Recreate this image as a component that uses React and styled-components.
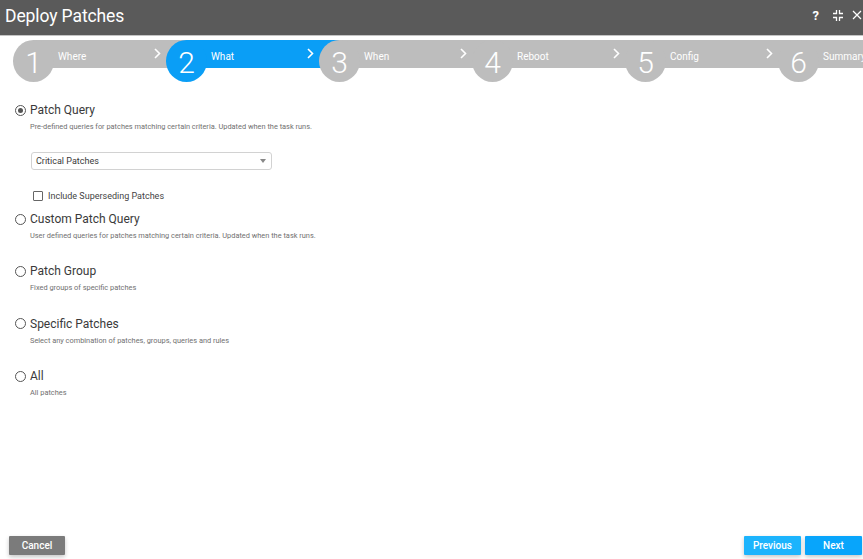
import React from "react";
import styled, { createGlobalStyle } from "styled-components";

const Global = createGlobalStyle`
  html, body { margin: 0; padding: 0; background: #fff; }
  body { font-family: Roboto, "Liberation Sans", Arial, sans-serif; }
  #root { height: 100vh; }
  * { box-sizing: border-box; }
`;

const Page = styled.div`
  height: 100vh;
  display: flex;
  flex-direction: column;
  overflow: hidden;
`;

const Header = styled.header`
  height: 36px;
  flex-shrink: 0;
  background: #5a5a5a;
  border-bottom: 1px solid #c4c4c4;
  display: flex;
  align-items: center;
  justify-content: space-between;
  padding: 0 1px 3px 5px;
`;

const Title = styled.h1`
  margin: 0;
  font-size: 17.5px;
  font-weight: 400;
  color: #fff;
  letter-spacing: -0.1px;
`;

const HeaderIcons = styled.div`
  display: flex;
  align-items: center;
  gap: 9px;
  color: #fff;
  margin-top: -2px;
`;

const Help = styled.span`
  font-size: 13px;
  font-weight: 700;
  line-height: 1;
  margin-right: 5px;
`;

const Steps = styled.nav`
  display: flex;
  padding: 4px 0 0 13px;
  flex-shrink: 0;
  overflow: hidden;
`;

const Step = styled.div`
  display: flex;
  width: 153px;
  flex-shrink: 0;
`;

const Circle = styled.div`
  position: relative;
  z-index: 2;
  width: 41px;
  height: 42px;
  flex-shrink: 0;
  border-radius: 50%;
  background: ${(p) => (p.$active ? "#0a9ef6" : "#bdbdbd")};
  color: #fff;
  font-size: 30px;
  font-weight: 300;
  display: flex;
  align-items: center;
  justify-content: center;
  padding-top: 3px;
`;

const Segment = styled.div`
  flex: 1 0 auto;
  height: 28px;
  margin-left: -20px;
  margin-right: -21px;
  padding: 0 26px 0 24px;
  background: ${(p) => (p.$active ? "#0a9ef6" : "#bdbdbd")};
  display: flex;
  align-items: center;
  justify-content: space-between;
  color: #fff;
`;

const StepLabel = styled.span`
  font-size: 10px;
  font-weight: 400;
  margin-top: 4px;
  white-space: nowrap;
`;

const Chevron = styled.svg`
  width: 7px;
  height: 11px;
  margin-top: -1px;
`;

const Content = styled.main`
  flex: 1;
  display: flex;
  flex-direction: column;
  padding: 21px 0 0 15px;
`;

const Option = styled.section`
  display: flex;
  flex-direction: column;
  margin-bottom: ${(p) => p.$gap}px;
`;

const RadioRow = styled.label`
  display: flex;
  align-items: center;
  gap: 4px;
  height: 14px;
  font-size: 12px;
  color: #3a3a3a;
`;

const Radio = styled.span`
  width: 11px;
  height: 11px;
  border-radius: 50%;
  border: 1px solid #555;
  display: flex;
  align-items: center;
  justify-content: center;
  flex-shrink: 0;
  &::after {
    content: "";
    width: 5px;
    height: 5px;
    border-radius: 50%;
    background: ${(p) => (p.$checked ? "#555" : "transparent")};
  }
`;

const Desc = styled.p`
  margin: 5px 0 0 15px;
  height: 10px;
  line-height: 10px;
  font-size: 7.4px;
  color: #707070;
`;

const Select = styled.div`
  margin: 20px 0 0 16px;
  width: 241px;
  height: 18px;
  border: 1px solid #d2d2d2;
  border-radius: 3px;
  display: flex;
  align-items: center;
  justify-content: space-between;
  padding: 0 5px 0 4px;
  font-size: 9px;
  color: #3a3a3a;
`;

const Caret = styled.span`
  width: 0;
  height: 0;
  border-left: 3.5px solid transparent;
  border-right: 3.5px solid transparent;
  border-top: 4px solid #888;
`;

const CheckRow = styled.label`
  margin: 20px 0 0 18px;
  display: flex;
  align-items: center;
  gap: 5px;
  height: 12px;
  font-size: 9px;
  color: #444;
`;

const Box = styled.span`
  width: 10px;
  height: 10px;
  border: 1px solid #666;
  border-radius: 1px;
`;

const Footer = styled.footer`
  display: flex;
  align-items: center;
  padding: 0 1px 4px 9px;
  gap: 4px;
`;

const Button = styled.button`
  height: 19px;
  width: ${(p) => p.$w || 57}px;
  border: none;
  border-radius: 1px;
  background: ${(p) => p.$bg};
  color: #fff;
  font-family: inherit;
  font-size: 10px;
  font-weight: 500;
  padding: 0;
  box-shadow: 0 2px 4px rgba(0, 0, 0, 0.22);
  margin-left: ${(p) => (p.$push ? "auto" : "0")};
`;

const steps = ["Where", "What", "When", "Reboot", "Config", "Summary"];

const options = [
  { label: "Patch Query", desc: "Pre-defined queries for patches matching certain criteria. Updated when the task runs.", checked: true, gap: 10 },
  { label: "Custom Patch Query", desc: "User defined queries for patches matching certain criteria. Updated when the task runs.", gap: 23.4 },
  { label: "Patch Group", desc: "Fixed groups of specific patches", gap: 23.4 },
  { label: "Specific Patches", desc: "Select any combination of patches, groups, queries and rules", gap: 23.4 },
  { label: "All", desc: "All patches", gap: 0 },
];

export default function App() {
  return (
    <Page>
      <Global />
      <Header>
        <Title>Deploy Patches</Title>
        <HeaderIcons>
          <Help>?</Help>
          <svg width="10" height="11" viewBox="0 0 10 11" fill="none" stroke="#fff" strokeWidth="1.3">
            <path d="M0 3.5h3.5V0M6.5 0v3.5H10M0 7.5h3.5V11M10 7.5H6.5V11" />
          </svg>
          <svg width="10" height="10" viewBox="0 0 10 10" stroke="#fff" strokeWidth="1.2">
            <path d="M1 1l8 8M9 1l-8 8" />
          </svg>
        </HeaderIcons>
      </Header>
      <Steps>
        {steps.map((s, i) => (
          <Step key={s}>
            <Circle $active={i === 1}>{i + 1}</Circle>
            <Segment $active={i === 1}>
              <StepLabel>{s}</StepLabel>
              {i < steps.length - 1 && (
                <Chevron viewBox="0 0 7 11" fill="none" stroke="#fff" strokeWidth="1.6">
                  <path d="M1 1l4.5 4.5L1 10" />
                </Chevron>
              )}
            </Segment>
          </Step>
        ))}
      </Steps>
      <Content>
        {options.map((o, i) => (
          <Option key={o.label} $gap={o.gap}>
            <RadioRow>
              <Radio $checked={o.checked} />
              {o.label}
            </RadioRow>
            <Desc>{o.desc}</Desc>
            {i === 0 && (
              <>
                <Select>
                  Critical Patches
                  <Caret />
                </Select>
                <CheckRow>
                  <Box />
                  Include Superseding Patches
                </CheckRow>
              </>
            )}
          </Option>
        ))}
      </Content>
      <Footer>
        <Button $bg="#7b7b7b" $w={56}>Cancel</Button>
        <Button $bg="#1cb4fd" $push>Previous</Button>
        <Button $bg="#08a5fb">Next</Button>
      </Footer>
    </Page>
  );
}
